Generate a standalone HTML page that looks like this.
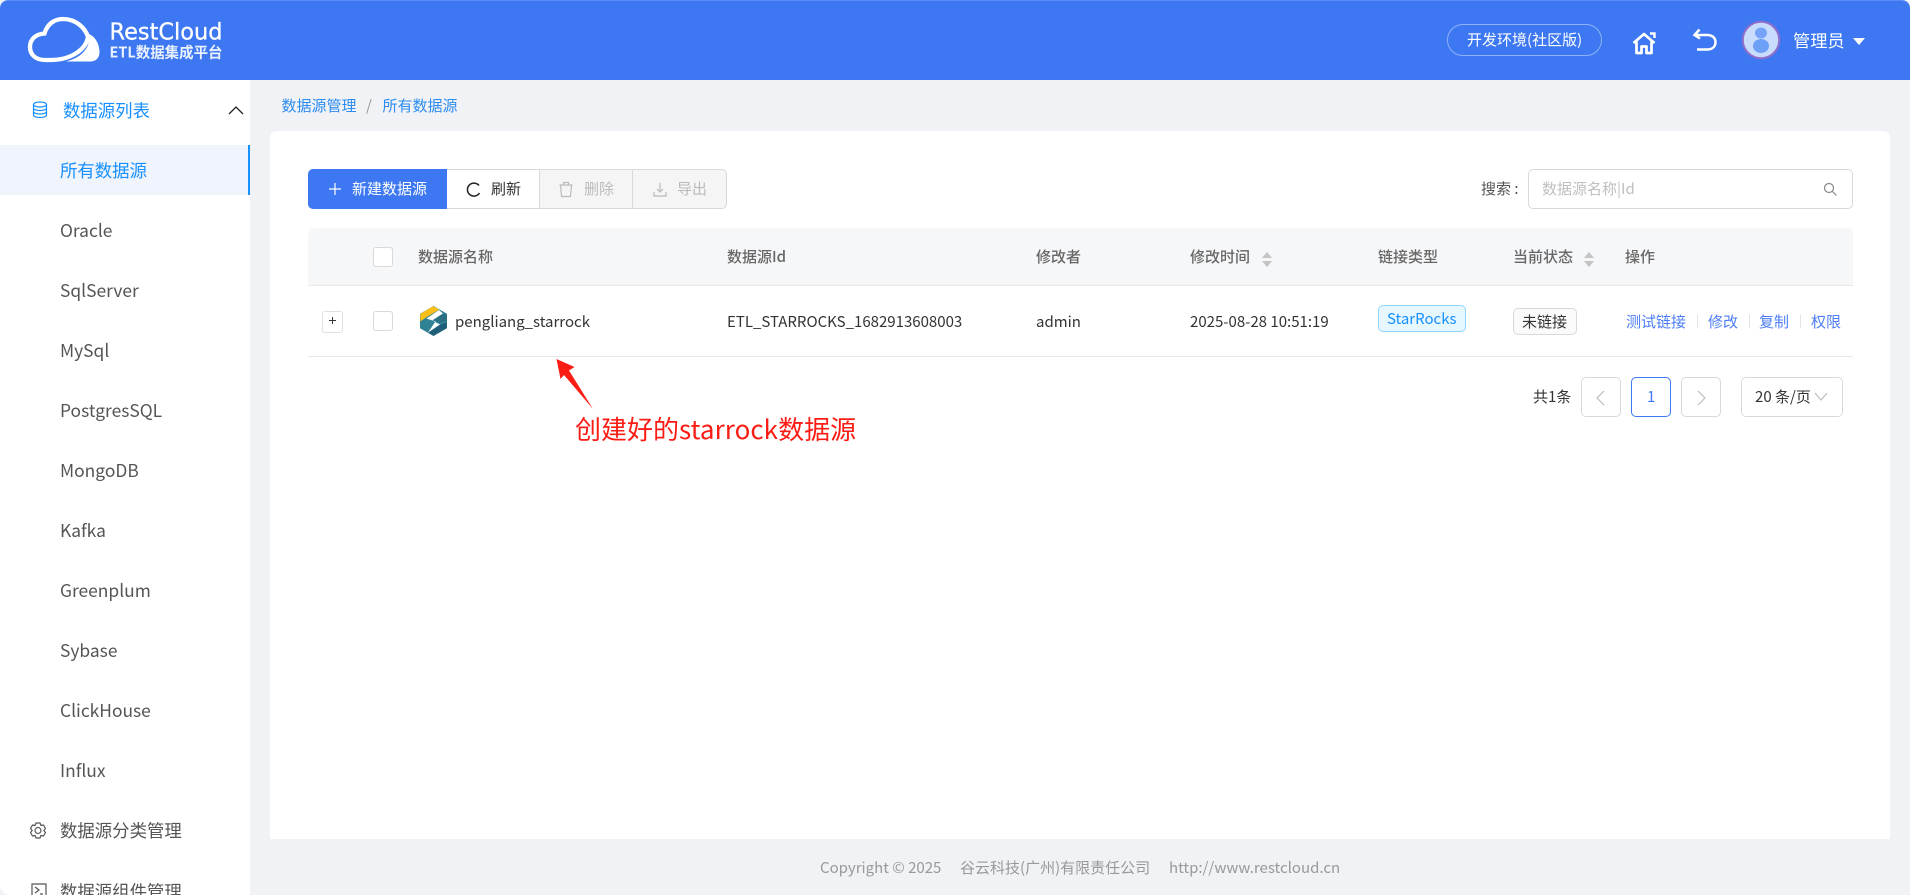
<!DOCTYPE html>
<html lang="zh-CN"><head><meta charset="utf-8"><title>RestCloud</title>
<style>
html,body{margin:0;padding:0;width:1910px;height:895px;overflow:hidden;background:#f0f2f6}
body{position:relative;font-family:"Noto Sans CJK SC","Liberation Sans",sans-serif;font-size:15px;color:#333}
.a{position:absolute;white-space:nowrap}
.t{position:absolute;white-space:nowrap;line-height:24px;transform:translateY(-12px)}
.s{font-size:17.4px;color:#555;left:60px;transform:translateY(-11px)}
.r{transform:translateY(-11px)}
.th{color:#666;font-weight:500}
.btn{position:absolute;top:169px;height:40px;box-sizing:border-box;border:1px solid #d9d9d9;border-left:0;background:#fff}
.dis{background:#f5f5f5;color:#bbb}
.pg{position:absolute;top:377px;height:40px;width:40px;box-sizing:border-box;border:1px solid #d9d9d9;border-radius:5px;background:#fff}
.cb{position:absolute;width:20px;height:20px;box-sizing:border-box;border:1px solid #d9d9d9;border-radius:3px;background:#fff;left:373px}
.lk{color:#4d7df5}
.sep{position:absolute;top:314px;width:1px;height:14px;background:#e4e4e4}
</style></head><body>
<div class="a" style="left:0;top:0;width:1910px;height:80px;background:#3d78f2;border-top:1px solid #5a8cf5;box-sizing:border-box;border-radius:8px 8px 0 0"></div>
<div class="a" style="left:0;top:80px;width:250px;height:815px;background:#fff;border-radius:0 0 0 10px"></div>

<svg class="a" style="left:26px;top:15px" width="78" height="50" viewBox="26 15 78 50">
<path d="M45 60C35 60 30 54 30 47C30 39 36 34 44.500 33.500C47 24.500 54 19 63 19C75 19 85 27 88 37C86 49 72 60 50 60Z" fill="none" stroke="#fff" stroke-width="4.300"/>
<path d="M89 34C96 37 99.500 45 99.500 52C99.500 58 96 61.500 90 61.500L66 61.500C80 58 91 49 89 34Z" fill="#fff"/>
</svg>
<svg class="a" style="left:108px;top:18px" width="118" height="42">
<text x="1.500" y="21.500" font-family="DejaVu Sans" font-size="23" font-weight="400" fill="#fff" stroke="#fff" stroke-width=".3" textLength="113" lengthAdjust="spacingAndGlyphs">RestCloud</text>
<text x="1.500" y="39.500" font-family="Noto Sans CJK SC" font-size="15" font-weight="700" fill="#eaf1ff" textLength="113" lengthAdjust="spacingAndGlyphs">ETL数据集成平台</text>
</svg>

<div class="a" style="left:1447px;top:24px;width:155px;height:32px;box-sizing:border-box;border:1px solid #8fb2f7;border-radius:16px"></div>
<div class="t" style="left:1467px;top:40px;color:#fff;font-size:15px">开发环境(社区版)</div>
<svg class="a" style="left:1630px;top:28px" width="28" height="28" viewBox="0 0 28 28" fill="none" stroke="#fff" stroke-width="2.700">
<path d="M3.500 15L14 6L24.500 15M6.500 13.500V25H11.500V18.500H16.500V25H21.500V13.500" stroke-linejoin="round"/><path d="M20 5.500H24.500V10" stroke-width="2.400"/>
</svg>
<svg class="a" style="left:1690px;top:26px" width="30" height="28" viewBox="0 0 30 28" fill="none" stroke="#fff" stroke-width="2.500">
<path d="M5 9H17C22.500 9 25.500 12 25.500 16C25.500 20.500 22.500 23.500 17 23.500H7" /><path d="M9.500 3.500L4.500 9L10 12.500"/>
</svg>
<svg class="a" style="left:1741px;top:20px" width="40" height="40" viewBox="0 0 40 40">
<circle cx="20" cy="20" r="18.200" fill="#c9dcfd" stroke="#8f6fc9" stroke-width="2"/>
<ellipse cx="20" cy="13" rx="6" ry="5.500" fill="#74a3f7"/><ellipse cx="20" cy="26" rx="8" ry="7" fill="#6fa0f8"/>
</svg>
<div class="t" style="left:1793px;top:40px;color:#fff;font-size:17.200px">管理员</div>
<div class="a" style="left:1853px;top:38px;width:0;height:0;border:6.500px solid transparent;border-top:7px solid #fff;border-bottom:0"></div>

<svg class="a" style="left:31px;top:100px" width="18" height="20" viewBox="0 0 18 20" fill="none" stroke="#1890ff" stroke-width="1.200">
<ellipse cx="9" cy="4.500" rx="6.500" ry="2.500"/><path d="M2.500 4.500V15C2.500 16.500 5.500 17.500 9 17.500S15.500 16.500 15.500 15V4.500M2.500 8C2.500 9.500 5.500 10.500 9 10.500S15.500 9.500 15.500 8M2.500 11.500C2.500 13 5.500 14 9 14S15.500 13 15.500 11.500"/>
</svg>
<div class="t r" style="left:63px;top:110px;font-size:17.400px;color:#1890ff">数据源列表</div>
<svg class="a" style="left:227px;top:104px" width="18" height="12" viewBox="0 0 18 12" fill="none" stroke="#222" stroke-width="1.300"><path d="M2 10L9 3L16 10"/></svg>

<div class="a" style="left:0;top:145px;width:250px;height:50px;background:#eff4fd"></div>
<div class="a" style="left:248px;top:145px;width:2px;height:50px;background:#1890ff"></div>
<div class="t s" style="top:170px;color:#1890ff">所有数据源</div>
<div class="t s" style="top:230px">Oracle</div>
<div class="t s" style="top:290px">SqlServer</div>
<div class="t s" style="top:350px">MySql</div>
<div class="t s" style="top:410px">PostgresSQL</div>
<div class="t s" style="top:470px">MongoDB</div>
<div class="t s" style="top:530px">Kafka</div>
<div class="t s" style="top:590px">Greenplum</div>
<div class="t s" style="top:650px">Sybase</div>
<div class="t s" style="top:710px">ClickHouse</div>
<div class="t s" style="top:770px">Influx</div>
<svg class="a" style="left:28px;top:822px" width="20" height="18" viewBox="0 0 20 18" fill="none" stroke="#555" stroke-width="1.200" stroke-linejoin="round">
<path d="M8 1H12L13 3.500L15.500 3L17.500 6.500L15.800 8.500L17.500 10.500L15.500 14L13 13.500L12 16H8L7 13.500L4.500 14L2.500 10.500L4.200 8.500L2.500 6.500L4.500 3L7 3.500Z"/><circle cx="10" cy="8.500" r="3"/>
</svg>
<div class="t s" style="top:830px">数据源分类管理</div>
<svg class="a" style="left:30px;top:882px" width="18" height="13" viewBox="0 0 18 13" fill="none" stroke="#555" stroke-width="1.200">
<path d="M2 14V2H16V14M5 5L9 8L5 11M10 12H13"/>
</svg>
<div class="t s" style="top:891px">数据源组件管理</div>

<div class="t r" style="left:281.500px;top:105px;color:#2d8cf0">数据源管理</div>
<div class="t r" style="left:366px;top:105px;color:#999">/</div>
<div class="t r" style="left:382.500px;top:105px;color:#2d8cf0">所有数据源</div>

<div class="a" style="left:270px;top:131px;width:1620px;height:708px;background:#fff;border-radius:6px 6px 0 0"></div>

<div class="a" style="left:308px;top:169px;width:139px;height:40px;background:#3d78f2;border-radius:5px 0 0 5px"></div>
<svg class="a" style="left:328px;top:182px" width="14" height="14" fill="none" stroke="#fff" stroke-width="1.200"><path d="M7 1V13M1 7H13"/></svg>
<div class="t" style="left:352px;top:189px;color:#fff">新建数据源</div>
<div class="btn" style="left:447px;width:93px"></div>
<svg class="a" style="left:465px;top:181px" width="17" height="17" fill="none" stroke="#222" stroke-width="1.500"><path d="M14 4.500A6.500 6.500 0 1 0 14.500 12"/></svg>
<div class="t" style="left:491px;top:189px">刷新</div>
<div class="btn dis" style="left:540px;width:93px"></div>
<svg class="a" style="left:558px;top:181px" width="16" height="17" fill="none" stroke="#bbb" stroke-width="1.200"><path d="M1.500 4H14.500M5.500 4V1.500H10.500V4M2.500 4L3.500 15.500H12.500L13.500 4"/></svg>
<div class="t" style="left:584px;top:189px;color:#bbb">删除</div>
<div class="btn dis" style="left:633px;width:94px;border-radius:0 5px 5px 0"></div>
<svg class="a" style="left:652px;top:181px" width="16" height="17" fill="none" stroke="#bbb" stroke-width="1.200"><path d="M8 2V11M5 8L8 11L11 8M2 11V15H14V11"/></svg>
<div class="t" style="left:677px;top:189px;color:#bbb">导出</div>

<div class="t" style="left:1481px;top:189px;color:#555">搜索 :</div>
<div class="a" style="left:1528px;top:169px;width:325px;height:40px;box-sizing:border-box;border:1px solid #d9d9d9;border-radius:5px;background:#fff"></div>
<div class="t" style="left:1542px;top:189px;color:#bfbfbf">数据源名称|Id</div>
<svg class="a" style="left:1823px;top:182px" width="15" height="15" fill="none" stroke="#888" stroke-width="1.200"><circle cx="6" cy="6" r="4.500"/><path d="M9.500 9.500L13.500 13.500"/></svg>

<div class="a" style="left:308px;top:228px;width:1545px;height:58px;background:#f6f7f9;border-bottom:1px solid #e8e8e8;box-sizing:border-box;border-radius:5px 5px 0 0"></div>
<div class="cb" style="top:247px"></div>
<div class="t th" style="left:418px;top:257px">数据源名称</div>
<div class="t th" style="left:727px;top:257px">数据源Id</div>
<div class="t th" style="left:1036px;top:257px">修改者</div>
<div class="t th" style="left:1190px;top:257px">修改时间</div>
<svg class="a" style="left:1261px;top:251px" width="12" height="17" fill="#c4c4c4"><path d="M6 1L11 7H1ZM1 10H11L6 16Z"/></svg>
<div class="t th" style="left:1378px;top:257px">链接类型</div>
<div class="t th" style="left:1513px;top:257px">当前状态</div>
<svg class="a" style="left:1583px;top:251px" width="12" height="17" fill="#c4c4c4"><path d="M6 1L11 7H1ZM1 10H11L6 16Z"/></svg>
<div class="t th" style="left:1625px;top:257px">操作</div>

<div class="a" style="left:308px;top:356px;width:1545px;height:1px;background:#e8e8e8"></div>
<div class="a" style="left:322px;top:311px;width:21px;height:22px;box-sizing:border-box;border:1px solid #e0e0e0;border-radius:3px;background:#fff"></div>
<svg class="a" style="left:328px;top:316px" width="9" height="9" fill="none" stroke="#333" stroke-width="1"><path d="M4.500 1V8M1 4.500H8"/></svg>
<div class="cb" style="top:311px"></div>
<svg class="a" style="left:420px;top:306px" width="27" height="30" viewBox="0 0 27 30">
<path d="M13.500 .5L26.500 8V22L13.500 29.500L.5 22V8Z" fill="#2f8294" stroke="#2f8294" stroke-linejoin="round"/>
<path d="M13 .5L19 3.500L8 10L.5 15V8Z" fill="#fbbf1a" stroke="#fbbf1a" stroke-width=".5" stroke-linejoin="round"/>
<path d="M26.800 16V22L13.500 29.800L8.500 27L18 20Z" fill="#1f5d78"/>
<path d="M19 4L6.500 12.500L15.500 15.500L8 26.500L20 18.500L12 14.500L23 7.500Z" fill="#fff"/>
<path d="M23 7.500L26.800 9V15L19 16.500L14 14Z" fill="#2b6f83"/>
</svg>
<div class="t r" style="left:455px;top:321px;color:#333">pengliang_starrock</div>
<div class="t r" style="left:727px;top:321px;color:#333">ETL_STARROCKS_1682913608003</div>
<div class="t r" style="left:1036px;top:321px;color:#333">admin</div>
<div class="t r" style="left:1190px;top:321px;color:#333">2025-08-28 10:51:19</div>
<div class="a" style="left:1378px;top:305px;width:88px;height:27px;box-sizing:border-box;border:1px solid #91d5ff;border-radius:5px;background:#e6f7ff"></div>
<div class="t r" style="left:1387px;top:318px;color:#1890ff">StarRocks</div>
<div class="a" style="left:1513px;top:308px;width:64px;height:27px;box-sizing:border-box;border:1px solid #d9d9d9;border-radius:5px;background:#fafafa"></div>
<div class="t r" style="left:1522px;top:321px;color:#333">未链接</div>
<div class="t lk r" style="left:1626px;top:321px">测试链接</div><div class="sep" style="left:1697px"></div>
<div class="t lk r" style="left:1708px;top:321px">修改</div><div class="sep" style="left:1749px"></div>
<div class="t lk r" style="left:1759px;top:321px">复制</div><div class="sep" style="left:1800px"></div>
<div class="t lk r" style="left:1811px;top:321px">权限</div>

<div class="t" style="left:1533px;top:397px">共1条</div>
<div class="pg" style="left:1581px"></div>
<svg class="a" style="left:1594px;top:389px" width="14" height="18" fill="none" stroke="#bbb" stroke-width="1.200"><path d="M10 2L3 9L10 16"/></svg>
<div class="pg" style="left:1631px;border-color:#3d78f2"></div>
<div class="t" style="left:1647px;top:397px;color:#3d78f2">1</div>
<div class="pg" style="left:1681px"></div>
<svg class="a" style="left:1694px;top:389px" width="14" height="18" fill="none" stroke="#bbb" stroke-width="1.200"><path d="M4 2L11 9L4 16"/></svg>
<div class="pg" style="left:1741px;width:102px"></div>
<div class="t" style="left:1755px;top:397px">20 条/页</div>
<svg class="a" style="left:1813px;top:391px" width="16" height="12" fill="none" stroke="#bbb" stroke-width="1.100"><path d="M2 2L8 9L14 2"/></svg>

<svg class="a" style="left:550px;top:352px" width="50" height="62" viewBox="550 352 50 62"><path d="M556.500 359L574.500 367L569 370.500L593 409L564 375L560.500 379Z" fill="#fb1d14"/></svg>
<div class="t" style="left:575px;top:429px;color:#fb1d14;font-size:26px;line-height:34px;transform:translateY(-17px)">创建好的<span style="letter-spacing:.05px">starrock</span>数据源</div>

<div class="t" style="left:820px;top:868px;color:#999">Copyright © 2025</div>
<div class="t" style="left:960px;top:868px;color:#999">谷云科技(广州)有限责任公司</div>
<div class="t" style="left:1169px;top:868px;color:#999">http://www.restcloud.cn</div>
</body></html>
